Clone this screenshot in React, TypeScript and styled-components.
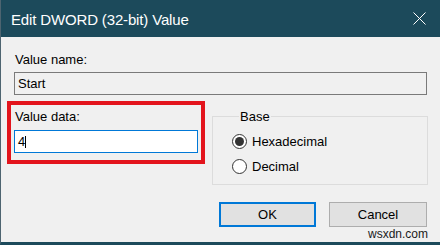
import React from "react";
import styled, { createGlobalStyle } from "styled-components";

const Global = createGlobalStyle`
  html, body { margin: 0; padding: 0; background: #f0f0f0; }
  body { font-family: "Liberation Sans", Arial, sans-serif; color: #000; }
`;

const Window = styled.div`
  width: 440px;
  height: 245px;
  box-sizing: border-box;
  background: #f0f0f0;
  border-left: 1px solid #4d6470;
  border-bottom: 3px solid #1c4a5b;
  display: flex;
  flex-direction: column;
  overflow: hidden;
`;

const TitleBar = styled.div`
  height: 37px;
  flex: none;
  background: #1c4a5b;
  display: flex;
  align-items: center;
  padding-left: 10px;
  padding-top: 3px;
  box-sizing: border-box;
`;

const Title = styled.div`
  flex: 1;
  color: #ffffff;
  font-size: 15px;
  letter-spacing: -0.15px;
  line-height: 18px;
`;

const CloseBox = styled.div`
  width: 42px;
  height: 100%;
  display: flex;
  align-items: center;
  justify-content: center;
  margin-top: -3px;
`;

const Body = styled.div`
  flex: 1;
  padding: 15px 13px 0 13px;
  display: flex;
  flex-direction: column;
  font-size: 13px;
  line-height: 15px;
`;

const Label = styled.div`
  color: #000;
  padding-left: 1px;
`;

const TextBox = styled.div<{ $focused?: boolean }>`
  height: 23px;
  box-sizing: border-box;
  border: 1px solid ${(p) => (p.$focused ? "#0078d7" : "#7a7a7a")};
  background: ${(p) => (p.$focused ? "#ffffff" : "#f0f0f0")};
  display: flex;
  align-items: center;
  padding-left: 3px;
  margin-top: ${(p) => (p.$focused ? 6 : 5)}px;
`;

const Caret = styled.span`
  display: inline-block;
  width: 1px;
  height: 12px;
  background: #000;
  margin-left: 0px;
`;

const MainRow = styled.div`
  display: flex;
  align-items: flex-start;
  margin: 6px -2px 0 -7px;
  gap: 7px;
`;

const Highlight = styled.div`
  width: 198px;
  box-sizing: border-box;
  border: 4px solid #e3141c;
  padding: 4px 3px 7px 3px;
  display: flex;
  flex-direction: column;
`;

const Group = styled.fieldset`
  width: 216px;
  box-sizing: border-box;
  margin: 8px 0 0 0;
  padding: 5px 0 5px 19px;
  border: 1px solid #dcdcdc;
  min-width: 0;
`;

const Legend = styled.legend`
  margin-left: 7px;
  padding: 0 1px;
  line-height: 15px;
  font-size: 13px;
`;

const RadioRow = styled.div`
  height: 25px;
  display: flex;
  align-items: center;
  gap: 5px;
`;

const RadioCircle = styled.span<{ $checked?: boolean }>`
  width: 15px;
  height: 15px;
  box-sizing: border-box;
  border-radius: 50%;
  border: 1px solid #333;
  background: #fff;
  display: flex;
  align-items: center;
  justify-content: center;
  &::after {
    content: "";
    width: 9px;
    height: 9px;
    border-radius: 50%;
    background: ${(p) => (p.$checked ? "#333" : "transparent")};
  }
`;

const ButtonRow = styled.div`
  display: flex;
  justify-content: flex-end;
  gap: 13px;
  margin-top: 17px;
`;

const Button = styled.div<{ $primary?: boolean; $w: number }>`
  width: ${(p) => p.$w}px;
  height: 25px;
  box-sizing: border-box;
  background: #e1e1e1;
  border: ${(p) => (p.$primary ? "2px solid #0078d7" : "1px solid #adadad")};
  display: flex;
  align-items: center;
  justify-content: center;
  font-size: 13px;
`;

const Watermark = styled.div`
  text-align: right;
  font-size: 12px;
  line-height: 14px;
  color: #1a1a1a;
  margin-right: -1px;
`;

export default function App() {
  return (
    <>
      <Global />
      <Window>
        <TitleBar>
          <Title>Edit DWORD (32-bit) Value</Title>
          <CloseBox>
            <svg width="13" height="13" viewBox="0 0 13 13">
              <path d="M0.5 0.5 L12.5 12.5 M12.5 0.5 L0.5 12.5" stroke="#ffffff" strokeWidth="1" />
            </svg>
          </CloseBox>
        </TitleBar>
        <Body>
          <Label>Value name:</Label>
          <TextBox>Start</TextBox>
          <MainRow>
            <Highlight>
              <Label>Value data:</Label>
              <TextBox $focused>
                4<Caret />
              </TextBox>
            </Highlight>
            <Group>
              <Legend>Base</Legend>
              <RadioRow>
                <RadioCircle $checked />
                Hexadecimal
              </RadioRow>
              <RadioRow>
                <RadioCircle />
                Decimal
              </RadioRow>
            </Group>
          </MainRow>
          <ButtonRow>
            <Button $primary $w={97}>OK</Button>
            <Button $w={98}>Cancel</Button>
          </ButtonRow>
          <Watermark>wsxdn.com</Watermark>
        </Body>
      </Window>
    </>
  );
}
